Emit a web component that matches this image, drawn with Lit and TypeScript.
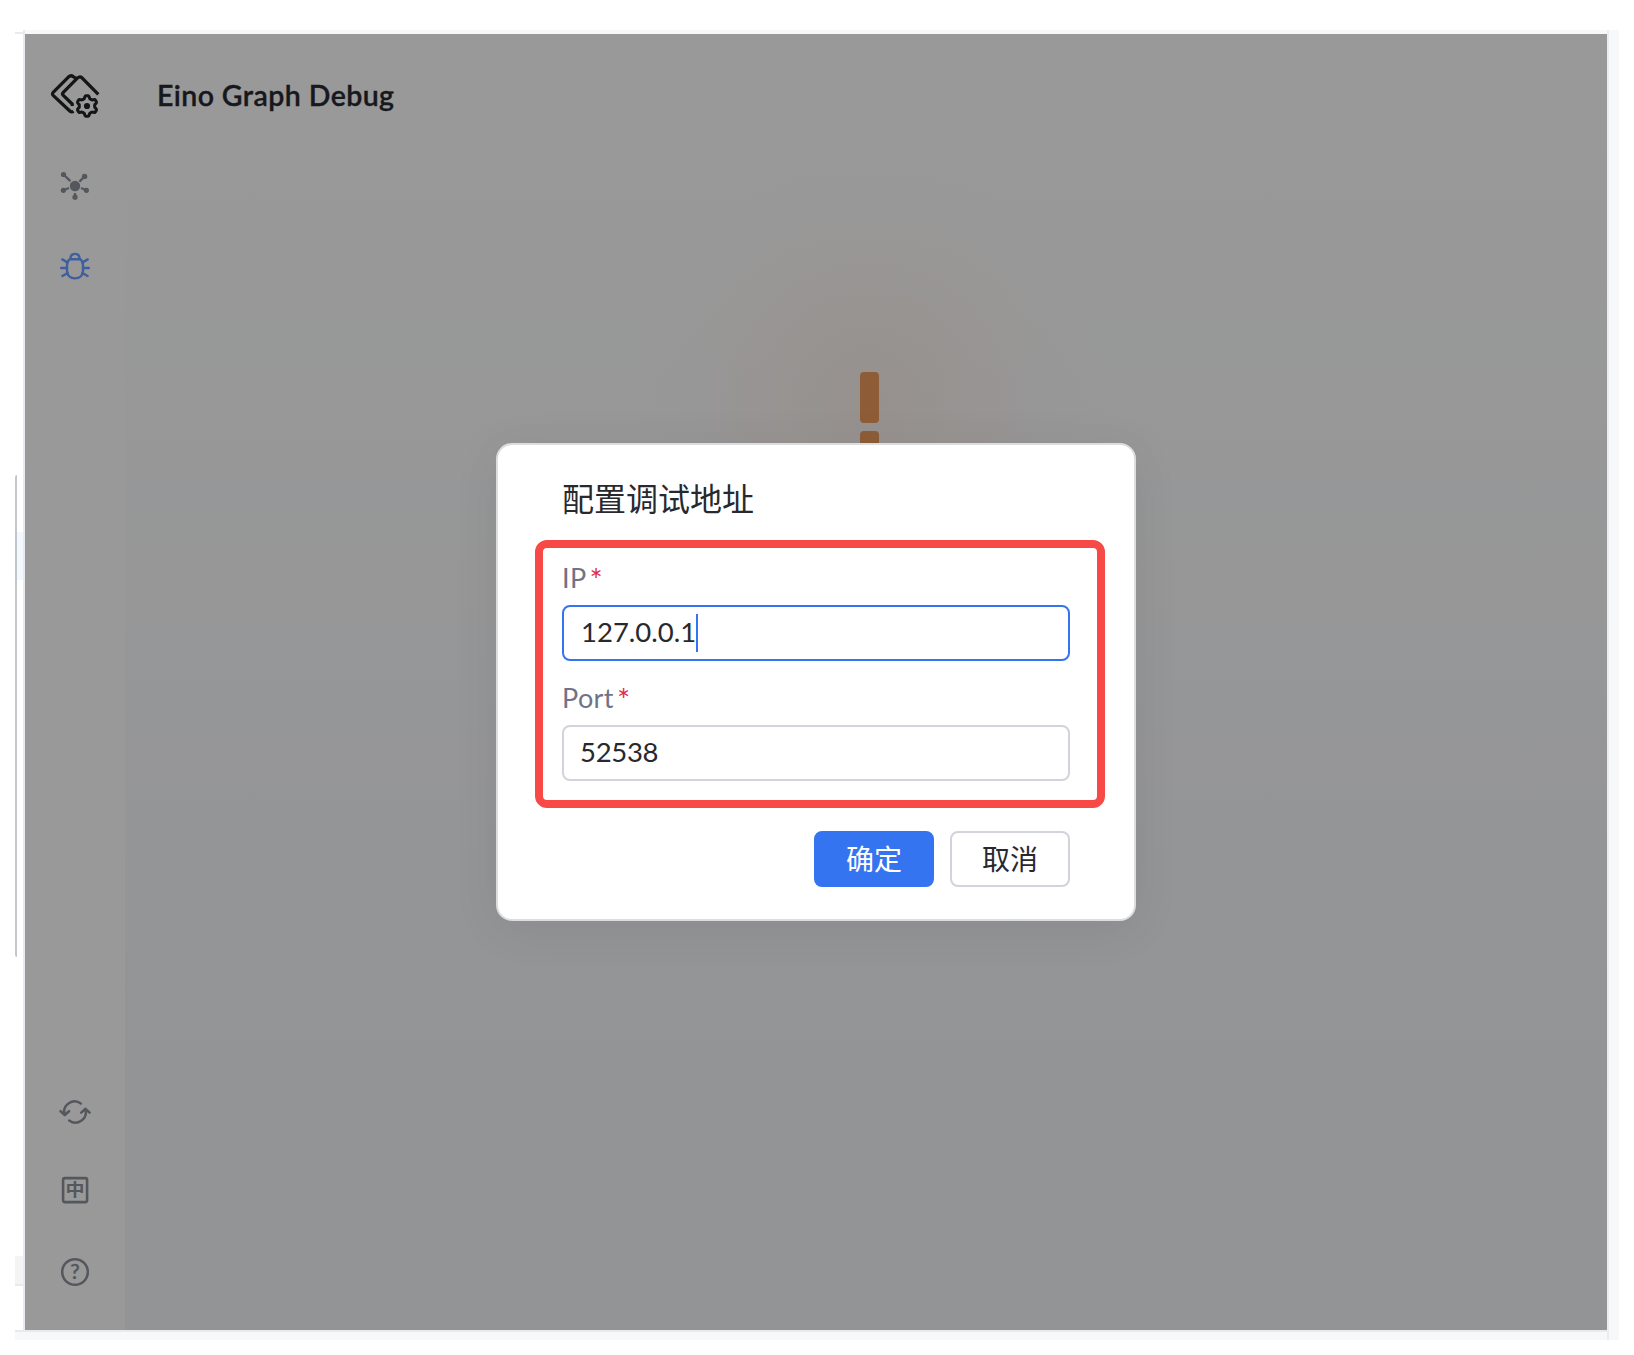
import { LitElement, html, css, svg } from "lit";
import { customElement, property } from "lit/decorators.js";

/** Closed six-tooth gear outline around (cx, cy). */
function gearPath(cx: number, cy: number): string {
  const points: string[] = [];
  for (let deg = 0; deg < 360; deg += 5) {
    const a = (deg * Math.PI) / 180;
    const wave = Math.cos(6 * (a + Math.PI / 2));
    const r = 9 + 1.35 * Math.tanh(2.2 * wave);
    points.push(`${(cx + r * Math.cos(a)).toFixed(2)} ${(cy + r * Math.sin(a)).toFixed(2)}`);
  }
  return `M${points.join("L")}Z`;
}

const icons = {
  logo: svg`<svg width="52" height="50" viewBox="50 71 52 50" fill="none" stroke="currentColor" stroke-width="3.3" stroke-linejoin="round">
    <path d="M73.6 111.4Q71.5 112.6 69.8 111L53.4 95.6Q51.6 93.9 53.4 92.1L68.6 76.8Q70.9 74.8 73.2 76.6L76.4 78.6"/>
    <path d="M72.2 106V104L63.3 95.4Q61.8 93.9 63.3 92.3L77.6 77.9Q79.8 75.9 82 77.8L98.3 94.4"/>
    <path d="${gearPath(87, 106)}" stroke-width="3"/>
    <circle cx="87" cy="106" r="3.1" fill="currentColor" stroke="none"/>
  </svg>`,
  graph: svg`<svg width="32" height="32" viewBox="59 170 32 32" fill="currentColor" stroke="currentColor" stroke-width="2.4">
    <g stroke="none">
      <circle cx="75" cy="186" r="5.2"/><circle cx="63.5" cy="174.5" r="2.6"/><circle cx="84.6" cy="176.4" r="2.7"/>
      <circle cx="63.4" cy="190.3" r="2.6"/><circle cx="86.4" cy="190.3" r="2.6"/><circle cx="75" cy="197.2" r="2.6"/>
    </g>
    <path d="M64 175L70.4 181.2M84 177L79.4 181.6M64 190L69 188M86 190L81 188M75 197V193"/>
  </svg>`,
  bug: svg`<svg width="32" height="32" viewBox="59 250 32 32" fill="none" stroke="currentColor" stroke-width="2.4" stroke-linecap="round" stroke-linejoin="round">
    <path d="M69.8 259.2H80.2Q83 261.6 83 265V271Q82.4 278.2 75 278.4Q67.6 278.2 67 271V265Q67 261.6 69.8 259.2Z"/>
    <path d="M70.4 258.6Q70.8 253.9 75 253.9T79.6 258.6"/>
    <path d="M62.3 259.4L67.4 262.4M61.2 268H67M62.4 276L67.6 273M87.7 259.4L82.6 262.4M88.8 268H83M87.6 276L82.4 273"/>
  </svg>`,
  refresh: svg`<svg width="32" height="32" viewBox="59 1096 32 32" fill="none" stroke="currentColor" stroke-width="2.5" stroke-linecap="round" stroke-linejoin="round">
    <path d="M64.6 1114.5A10.4 10.4 0 0 1 80.8 1103.4M60.6 1111.2L64.8 1115L69 1111.2"/>
    <path d="M85.4 1109.5A10.4 10.4 0 0 1 69.2 1120.6M81.2 1112.6L85.5 1108.8L89.6 1112.6"/>
  </svg>`,
  lang: svg`<svg width="32" height="32" viewBox="59 1174 32 32" fill="none" stroke="currentColor" stroke-width="2.6">
    <rect x="63.1" y="1178.1" width="24" height="24" rx="1.8"/>
    <text class="zh" x="75" y="1196.3" text-anchor="middle" textLength="19" lengthAdjust="spacingAndGlyphs">中</text>
  </svg>`,
  help: svg`<svg width="32" height="32" viewBox="59 1256 32 32" fill="none" stroke="currentColor" stroke-width="2.5">
    <circle cx="75" cy="1272" r="12.8"/>
    <text class="q" x="75" y="1279" text-anchor="middle">?</text>
  </svg>`,
};

@customElement("side-bar")
class SideBar extends LitElement {
  static styles = css`
    :host {
      display: flex;
      flex-direction: column;
      align-items: center;
      width: 100px;
      box-sizing: border-box;
      padding: 37px 0 42px;
      background: #999;
      color: #54575c;
    }
    svg { display: block; }
    .logo { color: #141516; margin-left: 2px; }
    .graph { margin-top: 49px; }
    .bug { margin-top: 48px; color: #3f5f9f; }
    .bottom { margin-top: auto; display: flex; flex-direction: column; }
    .lang { margin-top: 46px; }
    .help { margin-top: 50px; }
    .zh { font: 700 17px "Noto Sans CJK SC", sans-serif; fill: currentColor; stroke: none; }
    .q { font: 500 21px Lato, "Open Sans", sans-serif; fill: currentColor; stroke: currentColor; stroke-width: 0.4px; }
  `;
  render() {
    return html`
      <div class="logo">${icons.logo}</div>
      <div class="graph">${icons.graph}</div>
      <div class="bug">${icons.bug}</div>
      <div class="bottom">
        <div>${icons.refresh}</div>
        <div class="lang">${icons.lang}</div>
        <div class="help">${icons.help}</div>
      </div>
    `;
  }
}

@customElement("form-field")
class FormField extends LitElement {
  @property() label = "";
  @property() value = "";
  @property({ type: Boolean }) focused = false;
  static styles = css`
    :host { display: block; }
    .label { display: flex; height: 44px; line-height: 34px; font-size: 27px; letter-spacing: 0.4px; color: #6f7386; }
    .star { color: #de2c4b; margin-left: 3px; font-size: 31px; line-height: 37px; }
    .input {
      display: flex;
      align-items: center;
      box-sizing: border-box;
      height: 56px;
      padding: 0 0 0 16px;
      border: 2px solid #d2d3db;
      border-radius: 8px;
      font-size: 27.5px;
      letter-spacing: -0.3px;
      color: #27292f;
    }
    .input.focused { border-color: #3574f0; letter-spacing: 0; padding-left: 17px; }
    .text { padding-bottom: 3px; }
    .caret { width: 2px; height: 38px; background: #3574f0; }
  `;
  render() {
    return html`
      <div class="label"><span>${this.label}</span><span class="star">*</span></div>
      <div class="input ${this.focused ? "focused" : ""}">
        <span class="text">${this.value}</span>${this.focused ? html`<span class="caret"></span>` : ""}
      </div>
    `;
  }
}

@customElement("config-dialog")
class ConfigDialog extends LitElement {
  static styles = css`
    :host {
      display: block;
      position: relative;
      box-sizing: border-box;
      width: 640px;
      height: 478px;
      padding: 32px 64px 32px;
      background: #fff;
      border: 2px solid #dcdde1;
      border-radius: 16px;
      box-shadow: 0 8px 48px rgba(0, 0, 0, 0.07);
    }
    .title { height: 84px; line-height: 44px; font-size: 32px; font-weight: 400; color: #27292f; margin: 0; }
    .second { margin-top: 20px; }
    .actions { display: flex; justify-content: flex-end; gap: 16px; margin-top: 50px; }
    .btn {
      box-sizing: border-box;
      width: 120px;
      height: 56px;
      padding: 0 0 2px;
      border: 2px solid #d2d3db;
      border-radius: 8px;
      background: #fff;
      font: 400 28px Lato, "Noto Sans CJK SC", sans-serif;
      color: #27292f;
    }
    .primary { background: #3574f0; border-color: #3574f0; color: #fff; }
    .marker {
      position: absolute;
      left: 37px;
      top: 95px;
      width: 570px;
      height: 268px;
      box-sizing: border-box;
      border: 8px solid #f74a47;
      border-radius: 12px;
      pointer-events: none;
    }
  `;
  render() {
    return html`
      <h2 class="title">配置调试地址</h2>
      <form-field label="IP" value="127.0.0.1" focused></form-field>
      <form-field class="second" label="Port" value="52538"></form-field>
      <div class="actions">
        <button class="btn primary">确定</button>
        <button class="btn">取消</button>
      </div>
      <div class="marker"></div>
    `;
  }
}

@customElement("app-root")
class AppRoot extends LitElement {
  static styles = css`
    :host {
      display: block;
      width: 1634px;
      height: 1355px;
      box-sizing: border-box;
      padding: 30px 15px 15px;
      overflow: hidden;
      background: #fff;
      font-family: Lato, "Noto Sans CJK SC", sans-serif;
    }
    .frame {
      display: grid;
      grid-template-columns: 8px 2px 1582px 2px 10px;
      grid-template-rows: 4px 1296px 10px;
      height: 1310px;
    }
    .corner { border-bottom: 2px solid #e9eaf0; box-sizing: border-box; }
    .divider { grid-row: 1 / 3; grid-column: 2; background: #e9eaf0; }
    .top { grid-row: 1; grid-column: 3; background: #f6f8fa; }
    .line { grid-row: 1 / 4; grid-column: 4; background: #ebecee; }
    .right { grid-row: 1 / 4; grid-column: 5; background: #f6f8fa; }
    .bottom { grid-row: 3; grid-column: 1 / 4; box-sizing: border-box; border-top: 2px solid #e9eaec; background: #f6f8fa; }
    .sliver { grid-row: 2; grid-column: 1; display: flex; flex-direction: column; }
    .list { box-sizing: border-box; height: 482px; margin-top: 441px; padding-top: 57px; border-left: 2px solid #c6c7c8; border-radius: 2px 0 0 2px; }
    .row { height: 48px; background: #f3f8fe; box-shadow: -2px 0 #bfc5cb; }
    .cell { margin-top: 299px; height: 28px; background: #f4f4f4; border-bottom: 2px solid #e9eaf0; }
    .window { grid-row: 2; grid-column: 3; display: flex; position: relative; overflow: hidden; }
    .main {
      flex: 1;
      padding: 36px 0 0 32px;
      background:
        radial-gradient(circle 240px at 744px 366px, rgba(150, 138, 130, 0.5) 0%, rgba(151, 141, 135, 0.36) 40%, rgba(152, 147, 143, 0.14) 72%, rgba(152, 152, 152, 0) 100%),
        linear-gradient(180deg, #999 0%, #999 8%, #939496 82%, #939496 100%);
    }
    .heading {
      margin: 0;
      font-size: 28.5px;
      line-height: 50px;
      font-weight: 600;
      letter-spacing: 0.42px;
      -webkit-text-stroke: 0.35px #17181b;
      color: #17181b;
      white-space: nowrap;
    }
    .strokes { display: flex; flex-direction: column; gap: 8px; margin: 252.3px 0 0 703px; }
    .stroke { width: 18.5px; height: 50.5px; border-radius: 4px; background: #8e5d38; }
    .overlay { position: absolute; inset: 0; display: flex; justify-content: center; padding-top: 409px; }
    config-dialog { flex: none; }
  `;
  render() {
    return html`
      <div class="frame">
        <div class="corner"></div>
        <div class="divider"></div>
        <div class="top"></div>
        <div class="line"></div>
        <div class="right"></div>
        <div class="sliver">
          <div class="list"><div class="row"></div></div>
          <div class="cell"></div>
        </div>
        <div class="window">
          <side-bar></side-bar>
          <div class="main">
            <h1 class="heading">Eino Graph Debug</h1>
            <div class="strokes"><div class="stroke"></div><div class="stroke"></div></div>
          </div>
          <div class="overlay"><config-dialog></config-dialog></div>
        </div>
        <div class="bottom"></div>
      </div>
    `;
  }
}
